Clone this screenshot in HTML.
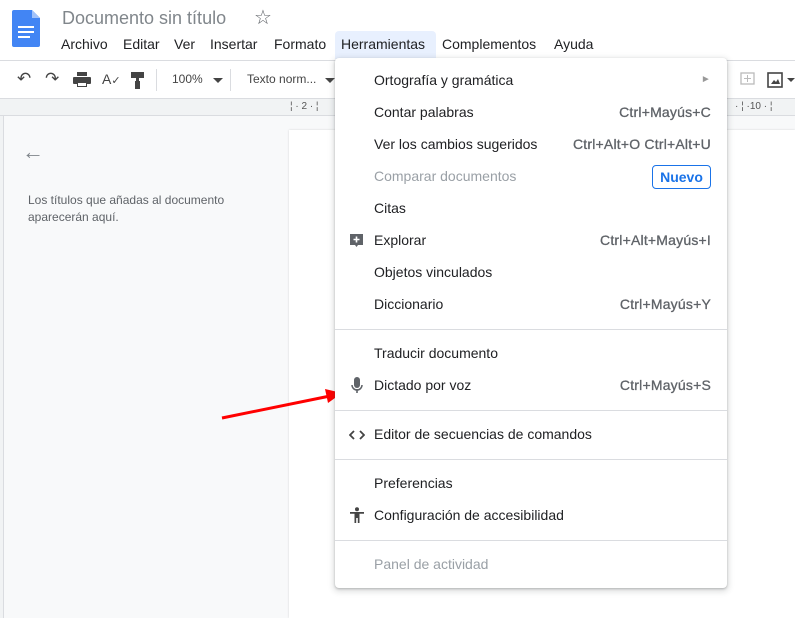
<!DOCTYPE html>
<html><head><meta charset="utf-8"><style>
*{margin:0;padding:0;box-sizing:border-box}
body{width:795px;height:618px;overflow:hidden;position:relative;background:#f8f9fa;font-family:"Liberation Sans",Arial,sans-serif;color:#202124}
.abs{position:absolute}
.top{left:0;top:0;width:795px;height:61px;background:#fff;border-bottom:1px solid #dadce0}
.tb{left:0;top:61px;width:795px;height:38px;background:#fff;border-bottom:1px solid #dadce0}
.menu span{position:absolute;top:36px;font-size:14px;color:#202124}
.ruler{left:0;top:99px;width:795px;height:17px;background:#f1f3f4;border-bottom:1px solid #dadce0}
.pm{left:0;top:116px;width:795px;height:502px;background:#f8f9fa}
.page{left:289px;top:130px;width:506px;height:488px;background:#fff;box-shadow:0 0 2px rgba(0,0,0,.15)}
.dd{left:335px;top:58px;width:392px;height:530px;background:#fff;border-radius:4px;box-shadow:0 2px 6px 2px rgba(60,64,67,.15),0 1px 2px rgba(60,64,67,.3)}
.it{position:absolute;left:39px;font-size:14px;color:#202124;line-height:16px}
.sc{position:absolute;right:16px;font-size:14px;color:#5f6368;line-height:16px;letter-spacing:0.2px;-webkit-text-stroke:0.3px #5f6368}
.sep{position:absolute;left:0;width:392px;height:1px;background:#dadce0}
.g{color:#9aa0a6}
</style></head><body>
<div class="abs top">
 <svg class="abs" style="left:12px;top:10px" width="28" height="37" viewBox="0 0 28 37"><path d="M2 0h18l8 8v27a2 2 0 0 1-2 2H2a2 2 0 0 1-2-2V2a2 2 0 0 1 2-2z" fill="#4285f4"/><path d="M20 0v8h8z" fill="#a1c2fa"/><rect x="6" y="16" width="16" height="2" fill="#fff"/><rect x="6" y="21" width="16" height="2" fill="#fff"/><rect x="6" y="26" width="12" height="2" fill="#fff"/></svg>
 <div class="abs" style="left:62px;top:8px;font-size:18px;color:#80868b">Documento sin título</div>
 <div class="abs" style="left:254px;top:5px;font-size:20px;color:#5f6368">☆</div>
 <div class="menu"><span style="left:61px">Archivo</span><span style="left:123px">Editar</span><span style="left:174px">Ver</span><span style="left:210px">Insertar</span><span style="left:274px">Formato</span><span style="left:335px;top:31px;height:28px;width:101px;background:#e8f0fe;padding:5px 0 0 6px;border-radius:4px 4px 0 0">Herramientas</span><span style="left:442px">Complementos</span><span style="left:554px">Ayuda</span></div>
</div>
<div class="abs tb">
 <div class="abs" style="left:17px;top:8px;font-size:17px;color:#444">↶</div>
 <div class="abs" style="left:45px;top:8px;font-size:17px;color:#444">↷</div>
 <svg class="abs" style="left:73px;top:11px" width="18" height="16"><rect x="4" y="0" width="10" height="4" fill="#444"/><rect x="0" y="5" width="18" height="7" rx="1" fill="#444"/><rect x="4" y="10" width="10" height="5" fill="#444"/><rect x="5" y="11" width="8" height="3" fill="#fff"/></svg>
 <div class="abs" style="left:102px;top:10px;font-size:14px;color:#444">A<span style="font-size:11px">✓</span></div>
 <svg class="abs" style="left:131px;top:11px" width="14" height="17"><rect x="0" y="0" width="13" height="6" fill="#444"/><rect x="5" y="6" width="3" height="3" fill="#444"/><rect x="4" y="9" width="5" height="8" fill="#444"/></svg>
 <div class="abs" style="left:156px;top:8px;width:1px;height:22px;background:#dadce0"></div>
 <div class="abs" style="left:172px;top:11px;font-size:12px;color:#444">100%</div>
 <svg class="abs" style="left:213px;top:17px" width="10" height="6"><path d="M0 0h10L5 5z" fill="#444"/></svg>
 <div class="abs" style="left:230px;top:8px;width:1px;height:22px;background:#dadce0"></div>
 <div class="abs" style="left:247px;top:11px;font-size:12px;color:#444">Texto norm...</div>
 <svg class="abs" style="left:325px;top:17px" width="10" height="6"><path d="M0 0h10L5 5z" fill="#444"/></svg>
 <svg class="abs" style="left:740px;top:11px" width="16" height="16"><rect x="1" y="1" width="13" height="11" fill="none" stroke="#bbb" stroke-width="1.3"/><path d="M7.5 3v7M4 6.5h7" stroke="#bbb"/></svg>
 <svg class="abs" style="left:767px;top:11px" width="16" height="16"><rect x="1" y="1" width="14" height="14" fill="none" stroke="#444" stroke-width="1.6"/><path d="M4 12l3-4 2 2 2-3 2 5z" fill="#444"/></svg>
 <svg class="abs" style="left:787px;top:17px" width="8" height="5"><path d="M0 0h8L4 4z" fill="#444"/></svg>
</div>
<div class="abs ruler">
 <div class="abs" style="left:290px;top:2px;font-size:10px;color:#555">¦ · 2 · ¦</div>
 <div class="abs" style="left:735px;top:2px;font-size:10px;color:#555">· ¦ ·10 · ¦</div>
</div>
<div class="abs pm"></div>
<div class="abs" style="left:0;top:116px;width:4px;height:502px;background:#f1f3f4;border-right:1px solid #dadce0"></div>
<div class="abs page"></div>
<div class="abs" style="left:22px;top:141px;font-size:22px;color:#80868b;line-height:22px">←</div>
<div class="abs" style="left:28px;top:192px;font-size:12px;color:#5f6368;line-height:17px">Los títulos que añadas al documento<br>aparecerán aquí.</div>
<svg class="abs" style="left:0;top:0" width="795" height="618"><path d="M222 418L330 396" stroke="#f00" stroke-width="3"/><path d="M342 393L325 389L328 403z" fill="#f00"/></svg>
<div class="abs dd">
 <div class="it" style="top:14px">Ortografía y gramática</div><div class="sc" style="top:14px;font-size:10px;color:#999;-webkit-text-stroke:0">►</div>
 <div class="it" style="top:46px">Contar palabras</div><div class="sc" style="top:46px">Ctrl+Mayús+C</div>
 <div class="it" style="top:78px">Ver los cambios sugeridos</div><div class="sc" style="top:78px">Ctrl+Alt+O Ctrl+Alt+U</div>
 <div class="it g" style="top:110px">Comparar documentos</div>
 <div class="abs" style="left:317px;top:107px;width:59px;height:24px;border:1px solid #1a73e8;border-radius:4px;color:#1a73e8;font-size:14px;font-weight:bold;text-align:center;line-height:22px">Nuevo</div>
 <div class="it" style="top:142px">Citas</div>
 <svg class="abs" style="left:14px;top:175px" width="15" height="15"><path d="M1 1h13v11H9l-1.5 2L6 12H1z" fill="#5f6368"/><path d="M7.5 3.5v6M4.5 6.5h6" stroke="#fff" stroke-width="1.6"/></svg>
 <div class="it" style="top:174px">Explorar</div><div class="sc" style="top:174px">Ctrl+Alt+Mayús+I</div>
 <div class="it" style="top:206px">Objetos vinculados</div>
 <div class="it" style="top:238px">Diccionario</div><div class="sc" style="top:238px">Ctrl+Mayús+Y</div>
 <div class="sep" style="top:271px"></div>
 <div class="it" style="top:287px">Traducir documento</div>
 <svg class="abs" style="left:16px;top:319px" width="12" height="18"><rect x="3" y="0" width="6" height="11" rx="3" fill="#5f6368"/><path d="M1 8a5 5 0 0 0 10 0" stroke="#5f6368" fill="none" stroke-width="1.5"/><rect x="5.2" y="12" width="1.6" height="4" fill="#5f6368"/></svg>
 <div class="it" style="top:319px">Dictado por voz</div><div class="sc" style="top:319px">Ctrl+Mayús+S</div>
 <div class="sep" style="top:352px"></div>
 <svg class="abs" style="left:14px;top:371px" width="16" height="12"><path d="M5 2L1 6l4 4M11 2l4 4-4 4" stroke="#444" stroke-width="1.8" fill="none"/></svg>
 <div class="it" style="top:368px">Editor de secuencias de comandos</div>
 <div class="sep" style="top:401px"></div>
 <div class="it" style="top:417px">Preferencias</div>
 <svg class="abs" style="left:14px;top:449px" width="16" height="17"><circle cx="8" cy="2.2" r="2" fill="#444"/><path d="M1 5h14v1.8h-4.5V16H8.8v-5H7.2v5H5.5V6.8H1z" fill="#444"/></svg>
 <div class="it" style="top:449px">Configuración de accesibilidad</div>
 <div class="sep" style="top:482px"></div>
 <div class="it g" style="top:498px">Panel de actividad</div>
</div>
</body></html>
